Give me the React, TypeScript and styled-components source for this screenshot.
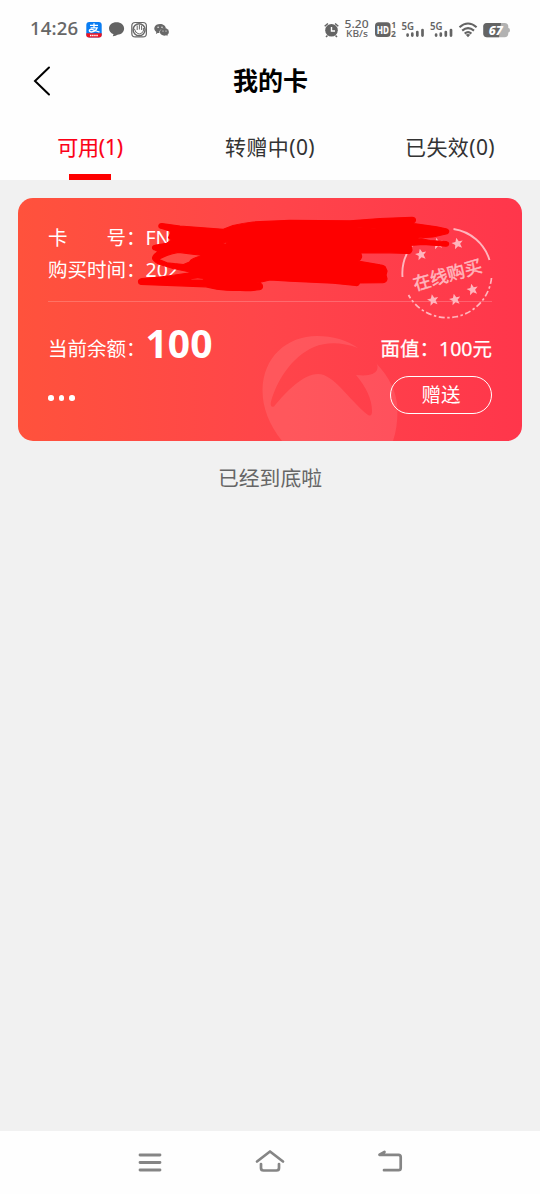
import React from "react";
import styled, { createGlobalStyle } from "styled-components";

const GlobalStyle = createGlobalStyle`
  * { box-sizing: border-box; }
  body {
    margin: 0;
    background: #f1f1f1;
    font-family: "Noto Sans", "Noto Sans CJK SC", sans-serif;
  }
`;

const Screen = styled.div`
  width: 540px;
  height: 1194px;
  display: flex;
  flex-direction: column;
  background: #f1f1f1;
  overflow: hidden;
`;

const StatusBar = styled.div`
  height: 56px;
  padding: 4px 30px 0;
  display: flex;
  justify-content: space-between;
  align-items: center;
  background: #fefefe;
  color: #666;
`;

const Clock = styled.span`
  width: 54px;
  margin-bottom: 4px;
  font-size: 18.5px;
  line-height: 24px;
  font-weight: 500;
  letter-spacing: 0.2px;
  -webkit-text-stroke: 0.1px #666;
`;

const StatusGroup = styled.div`
  display: flex;
  align-items: center;
  height: 24px;
`;

const Header = styled.header`
  height: 52px;
  display: grid;
  grid-template-columns: 80px 1fr 80px;
  align-items: center;
  background: #fefefe;
`;

const BackButton = styled.button`
  height: 52px;
  padding: 0 0 2px 33px;
  border: 0;
  background: none;
  display: flex;
  align-items: center;
`;

const Title = styled.h1`
  margin: 0;
  text-align: center;
  font-size: 25px;
  line-height: 49px;
  height: 52px;
  font-weight: 700;
  color: #000;
  padding-left: 1px;
`;

const Tabs = styled.nav`
  height: 72px;
  display: grid;
  grid-template-columns: repeat(3, 1fr);
  background: #fefefe;
`;

const Tab = styled.button<{ $active?: boolean }>`
  border: 0;
  padding: 22px 0 0;
  background: none;
  font: 400 21px/34px "Noto Sans", "Noto Sans CJK SC", sans-serif;
  color: ${(p) => (p.$active ? "#fc0016" : "#333")};
  letter-spacing: ${(p) => (p.$active ? "-0.2px" : "0.4px")};
  -webkit-text-stroke: ${(p) => (p.$active ? "0.15px #fc0016" : "0")};
  display: flex;
  flex-direction: column;
  align-items: center;
  justify-content: space-between;
`;

const TabLine = styled.i`
  width: 42px;
  height: 6px;
  background: #fe0000;
`;

const Content = styled.main`
  flex: 1;
  padding: 18px 18px 0;
`;

const Card = styled.section`
  position: relative;
  height: 243px;
  border-radius: 15px;
  padding: 24px 30px 0;
  color: #fff;
  background: linear-gradient(90deg, #ff523c, #ff454a 50%, #ff364b);
  overflow: hidden;
`;

const Overlay = styled.svg`
  position: absolute;
  left: 0;
  top: 0;
`;

const InfoRow = styled.div`
  height: 31.5px;
  line-height: 31.5px;
  font-size: 19.5px;
  white-space: pre;
`;

const Divider = styled.hr`
  margin: 16px 0 0;
  border: 0;
  height: 1px;
  background: rgba(255, 255, 255, 0.2);
`;

const BalanceRow = styled.div`
  margin-top: 14px;
  height: 50px;
  display: flex;
  align-items: baseline;
  font-size: 19.5px;
  line-height: 50px;
  white-space: nowrap;
`;

const Amount = styled.strong`
  font-size: 39px;
  font-weight: 700;
  transform: translateY(2px);
`;

const FaceValue = styled.span`
  margin-left: auto;
  -webkit-text-stroke: 0.25px #fff;
`;

const ActionRow = styled.div`
  position: relative;
  margin-top: 10px;
  display: flex;
  justify-content: space-between;
`;

const More = styled.button`
  border: 0;
  padding: 6px 0 0;
  background: none;
  display: flex;
  align-items: center;
  gap: 5px;
`;

const Dot = styled.i`
  width: 5.5px;
  height: 5.5px;
  border-radius: 50%;
  background: #fff;
`;

const GiftButton = styled.button`
  width: 102px;
  height: 38px;
  border: 1px solid #fff;
  border-radius: 19px;
  padding: 0;
  background: none;
  color: #fff;
  font: 400 19.5px/34px "Noto Sans", "Noto Sans CJK SC", sans-serif;
`;

const EndText = styled.p`
  margin: 22px 0 0;
  text-align: center;
  font-size: 20.8px;
  line-height: 30px;
  color: #666;
`;

const NavBar = styled.footer`
  height: 63px;
  padding: 0 90px;
  display: grid;
  grid-template-columns: repeat(3, 1fr);
  justify-items: center;
  background: #fefefe;
`;

const STAR = "M0-5.8 1.7-2 5.7-1.8 2.5.9 3.6 5 0 2.7-3.6 5-2.5.9-5.7-1.8-1.7-2Z";
const stars = [[421, 254.5], [437.5, 243.5], [457.5, 243.5], [433, 300], [455, 299.5], [472.5, 289.5]];

const LeftIcons = () => (
  <svg width="90" height="24" viewBox="84 18 90 24">
    <rect x="86.3" y="22" width="15.4" height="15.5" rx="3" fill="#0a7df2" />
    <path d="M86.3 33.3H101.7V35Q101.7 37.5 98.7 37.5H89.3Q86.3 37.5 86.3 35Z" fill="#f01320" />
    <path d="M90 25.3H98M94 23.3V27.8M90.6 27.8H97.2Q95.5 32 91.2 32 88.7 31.5 89.5 30C91 28 95 31 99.5 32" fill="none" stroke="#fff" strokeWidth="1.3" />
    <path d="M90 35.4H98" stroke="#fff" strokeWidth="1.5" strokeDasharray="1.5 .6" />
    <path d="M116.5 22.3C121 22.3 124.1 25 124.1 28.5S121 34.6 117.5 34.8Q116 36.2 112.8 36.3L113.5 34.2C110.500 33 109 31 109 28.5 109 25 112 22.3 116.5 22.3Z" fill="#636363" />
    <rect x="131.8" y="22.5" width="14.6" height="14.4" rx="3.5" fill="none" stroke="#686868" strokeWidth="1.2" />
    <circle cx="139.1" cy="29.7" r="6" fill="none" stroke="#686868" strokeWidth="1.5" />
    <path d="M136 32.5 134.3 28.7M137.2 30V25.5M139.4 29.5V24.5M141.6 30V25.5M143.4 31V28M136 32Q140 36.5 143.4 31" fill="none" stroke="#686868" strokeWidth="1" />
    <path d="M160 24C163.1 24 165.6 25.7 165.8 28.2 161.5 28 158.8 30.4 159.5 33L157.8 32.9 155.9 34 156.3 32C152.4 29 154.5 24 160 24Z" fill="#686868" />
    <ellipse cx="164.4" cy="31.9" rx="4.5" ry="3.8" fill="#686868" />
    <path d="m166 34.7 1.3 1.5.3-2.7" fill="#686868" />
    <g fill="#fefefe"><circle cx="158.1" cy="27.2" r=".7" /><circle cx="162" cy="27.2" r=".7" /><circle cx="163" cy="31" r=".6" /><circle cx="166" cy="31" r=".6" /></g>
  </svg>
);

const RightIcons = () => (
  <svg width="190" height="26" viewBox="320 17 190 26" fontFamily="Noto Sans" fill="#646464">
    <circle cx="331.5" cy="30.3" r="6.3" />
    <path d="m324.7 26.2 3.2-2.7M338.3 26.2l-3.2-2.7M327.5 35.5l-1.5 1.5M335.5 35.5l1.5 1.5" stroke="#646464" strokeWidth="1.5" />
    <path d="M331.5 27V31H335" fill="none" stroke="#fefefe" strokeWidth="1.4" />
    <text x="344.6" y="27.8" fontSize="10.5" fontWeight="500" textLength="24" lengthAdjust="spacingAndGlyphs">5.20</text>
    <text x="346" y="37.4" fontSize="9.5" fontWeight="500" textLength="22" lengthAdjust="spacingAndGlyphs">KB/s</text>
    <rect x="375" y="22.3" width="15.5" height="14.8" rx="3.5" />
    <text x="376.7" y="33.5" fontSize="10" fontWeight="800" fill="#fefefe" textLength="12.3" lengthAdjust="spacingAndGlyphs">HD</text>
    <text x="391.4" y="28" fontSize="8" fontWeight="700">1</text>
    <text x="391" y="37" fontSize="8.5" fontWeight="700">2</text>
    {[0, 28.5].map((dx) => (
      <g key={dx} transform={`translate(${dx} 0)`}>
        <text x="401.5" y="29.5" fontSize="10" fontWeight="600" textLength="12.5" lengthAdjust="spacingAndGlyphs">5G</text>
        <path d="M407.6 34.7V35.6M412.3 33.7V35.6M417.3 32V35.6M422.5 30V35.6" stroke="#646464" strokeWidth="2.7" strokeLinecap="round" />
      </g>
    ))}
    <g fill="none" stroke="#646464" strokeWidth="2.1">
      <path d="M459.5 27.2Q468 19.8 476.6 27.2M462.2 30.6Q468 25.6 474 30.6M464.7 33.6Q468 30.8 471.4 33.6" />
    </g>
    <path d="m465.7 34.8q2.3-1.6 4.6 0L468 37.3Z" />
    <path d="M487 23H504.5Q508.3 23 508.3 26.5V28Q510 28 510 30.2T508.3 32.4V33.5Q508.3 37.2 504.5 37.2H487Q483.3 37.2 483.3 33.5V26.5Q483.3 23 487 23Z" fill="#b2b2b2" />
    <path d="M487 23H501L499 37.2H487Q483.3 37.2 483.3 33.5V26.5Q483.3 23 487 23Z" />
    <text x="488.7" y="34.6" fontSize="12.5" fontWeight="800" fontStyle="italic" fill="#fff" textLength="14" lengthAdjust="spacingAndGlyphs">67</text>
  </svg>
);

const Watermark = () => (
  <Overlay width="504" height="243" viewBox="18 198 504 243">
    <path fill="#fff" fillOpacity=".1" d="M282 441C269 424 262.5 408 262.5 390C263 357 287 336 317 336C333 336 347 340 358 348C341 342 327 342 314 347C291 357 276 382 270.7 403Q270.5 408 274 406.5C286 392 303 374 318 374C334 374 348 399 368 415Q372 417 372 411C372 399 366 387 356 375Q374 377 377 370 378.5 366 376 363C389 377 397 391 397.5 410Q397.5 428 393 441Z" />
  </Overlay>
);

const Stamp = () => (
  <Overlay width="504" height="243" viewBox="18 198 504 243">
    <g fill="none" stroke="#ffb5bd">
      <path d="M402.5 277A44.5 44.5 0 0 1 424 235M453.5 229A44.5 44.5 0 0 1 489.5 260" strokeWidth="1.9" />
      <path d="M491.5 278A44.5 44.5 0 0 1 408.5 295" strokeWidth="1.7" strokeDasharray="6 2.5 2.5 2.5" />
    </g>
    <g fill="#ffb5bd">
      {stars.map(([x, y]) => (
        <path key={`${x}-${y}`} d={STAR} transform={`translate(${x} ${y}) rotate(-12)`} />
      ))}
      <text x="447.5" y="281.5" textAnchor="middle" fontSize="17.7" stroke="#ffb5bd" strokeWidth=".5" fontFamily="Noto Sans CJK SC" transform="rotate(-16 447 275)">在线购买</text>
    </g>
  </Overlay>
);

const Scribble = () => (
  <Overlay width="504" height="243" viewBox="18 198 504 243">
    <path
      fill="#fe0000"
      stroke="#fe0000"
      strokeWidth="1.2"
      strokeLinejoin="round"
      fillRule="evenodd"
      d="M158.800 226Q159 223.500 162 223.600L180 226 223.300 229.300 233 225.500Q243 223 253 222L290 220.300 350 220.800 380 218.500 412 217.300Q415.500 217.500 415.500 220T412 223.300L436.700 226.800 446 228.800Q448.800 229.500 448.700 231.500T446 234L433 237 418 238 430 240.500 446 241.500Q448.700 242 448.600 244T446 246.200L423 244.400 411 245.300 412 250Q411 253.500 408 253.500L390 252.800 360 252.700Q362 255 361.500 257.500T358 261L380 264.800Q385 265.500 385.500 267.500L387 271 386 275 387 279Q386.500 282.500 383 282.700L359.500 283Q358.500 286 355.500 285.500L333 283.200 290 281.200 270 280 257 283H260Q262.500 284 262.500 286.500T259.500 289.700Q250 291 240 290.500 225 290.500 216.700 289.200L206 286.800 141 284.400Q138.500 284 138.500 281.500T142 278.500L160 277 175 275 192 272.500 183 270.500 173 268.500 158.500 264Q152.500 260.500 152.500 258T158 251.500L155 250Q152.500 249.500 152.500 247.500T156 245L166.700 243.300 171.700 240 168.500 237.700 170.500 233.300 170 231 161.700 228.400Q158.800 228 158.800 226ZM158.500 259.300Q168 254 178.500 252.300L203 255.500Q191 258 189.500 262L183.500 264.500 167 262.800ZM189 279.800Q191 277.900 198 278L204 278.500 203 280Z M353 227.300 377 229V229.800Q365 229.500 353 227.300ZM364 240.200 371 240.200 367 241ZM221.500 243.500 228 241.500 226 244Z"
    />
  </Overlay>
);

const App: React.FC = () => (
  <>
    <GlobalStyle />
    <Screen>
      <StatusBar>
        <StatusGroup>
          <Clock>14:26</Clock>
          <LeftIcons />
        </StatusGroup>
        <StatusGroup>
          <RightIcons />
        </StatusGroup>
      </StatusBar>
      <Header>
        <BackButton aria-label="返回">
          <svg width="19" height="30" viewBox="0 0 19 30">
            <path d="M16 1.5 2 15 16 28.500" fill="none" stroke="#000" strokeWidth="2" strokeLinecap="round" />
          </svg>
        </BackButton>
        <Title>我的卡</Title>
      </Header>
      <Tabs>
        <Tab $active>
          可用(1)
          <TabLine />
        </Tab>
        <Tab>转赠中(0)</Tab>
        <Tab>已失效(0)</Tab>
      </Tabs>
      <Content>
        <Card>
          <Watermark />
          <InfoRow>卡　　号：FN</InfoRow>
          <InfoRow>购买时间：202</InfoRow>
          <Divider />
          <BalanceRow>
            当前余额：<Amount>100</Amount>
            <FaceValue>面值：100元</FaceValue>
          </BalanceRow>
          <ActionRow>
            <More aria-label="更多">
              <Dot />
              <Dot />
              <Dot />
            </More>
            <GiftButton>赠送</GiftButton>
          </ActionRow>
          <Stamp />
          <Scribble />
        </Card>
        <EndText>已经到底啦</EndText>
      </Content>
      <NavBar>
        <svg width="60" height="63" viewBox="120 1131 60 63" fill="none" stroke="#858585" strokeWidth="2.8" strokeLinecap="round">
          <path d="M140 1155H160M140 1162.5H160M140 1170H160" />
        </svg>
        <svg width="60" height="63" viewBox="240 1131 60 63" fill="none" stroke="#858585" strokeWidth="2.7" strokeLinecap="round" strokeLinejoin="round">
          <path d="M257 1161.5 270 1151.5 283 1161.5M261 1164V1168Q261 1170.5 263.5 1170.5H276.5Q279 1170.5 279 1168V1164" />
        </svg>
        <svg width="60" height="63" viewBox="360 1131 60 63" fill="none" stroke="#858585" strokeWidth="2.7" strokeLinecap="round" strokeLinejoin="round">
          <path d="M384.5 1152 379.5 1154.8H398.5Q400.7 1154.8 400.7 1157V1168Q400.7 1170.2 398.5 1170.2H384" />
        </svg>
      </NavBar>
    </Screen>
  </>
);

export default App;
